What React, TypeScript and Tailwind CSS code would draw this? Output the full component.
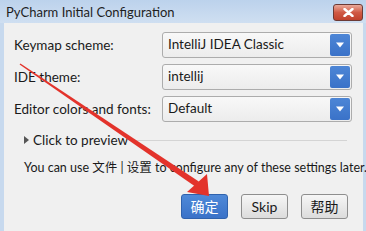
import React from 'react'

const ui = { fontFamily: 'Lato, "Noto Sans CJK SC", sans-serif' }

function Combo({ value }: { value: string }) {
  return (
    <div className="flex h-[26px] w-[190px] items-center rounded-[3px] border border-[#acacac] bg-gradient-to-b from-[#f8f8f8] to-[#ececec]">
      <span className="flex-1 pl-[5px] text-[13.5px] leading-none text-[#1a1a1a]">{value}</span>
      <div className="mr-px flex h-[22px] w-[20px] items-center justify-center rounded-[2px] bg-gradient-to-b from-[#4d86d6] to-[#3a72c8]">
        <svg width="8" height="6" viewBox="0 0 8 6">
          <path d="M0 0.5 L8 0.5 L4 5.5 Z" fill="#ffffff" />
        </svg>
      </div>
    </div>
  )
}

function Row({ label, value }: { label: string; value: string }) {
  return (
    <div className="flex h-[26px] items-center">
      <span className="w-[148px] text-[13.5px] text-[#1a1a1a]">{label}</span>
      <Combo value={value} />
    </div>
  )
}

function Arrow() {
  return (
    <svg className="pointer-events-none absolute left-0 top-0" width="366" height="231" viewBox="0 0 366 231">
      <polygon points="19.6,64.6 20.4,63.4 198.8,181.4 195.2,186.6" fill="#e3332b" />
      <polygon points="209,196 207,174 187,192" fill="#e3332b" />
    </svg>
  )
}

export default function App() {
  return (
    <div className="relative flex h-[231px] w-[366px] flex-col overflow-hidden bg-[#c7d9ee]" style={ui}>
      {/* Title bar */}
      <div className="flex h-[23px] items-center justify-between bg-gradient-to-b from-[#bcd2ec] to-[#cfdff1] pl-[6px] pr-[3px]">
        <span className="pt-[2px] text-[13px] text-[#1e1e1e]">PyCharm Initial Configuration</span>
        <div className="mt-[2px] flex h-[17px] w-[30px] items-center justify-center rounded-[3px] border border-[#6b3a35] bg-gradient-to-b from-[#e9a99a] via-[#d05a45] to-[#c0412c]">
          <svg width="11" height="9" viewBox="0 0 11 9">
            <path d="M1.5 1 L9.5 8 M9.5 1 L1.5 8" stroke="#ffffff" strokeWidth="2.4" strokeLinecap="round" />
          </svg>
        </div>
      </div>

      {/* Body */}
      <div className="ml-[4px] mr-[3px] flex flex-1 flex-col bg-[#f0f0f0] pl-[10px] pt-[9px]">
        <div className="flex flex-col gap-[6px]">
          <Row label="Keymap scheme:" value="IntelliJ IDEA Classic" />
          <Row label="IDE theme:" value="intellij" />
          <Row label="Editor colors and fonts:" value="Default" />
        </div>

        <div className="mt-[9px] flex h-[18px] items-center pl-[10px] pr-[16px]">
          <svg width="5" height="8" viewBox="0 0 5 8" className="mr-[4px]">
            <path d="M0 0 L5 4 L0 8 Z" fill="#555555" />
          </svg>
          <span className="text-[13.5px] text-[#1a1a1a]">Click to preview</span>
          <div className="ml-[6px] h-px flex-1 bg-[#d4d4d4]" />
        </div>

        <div className="mt-[9px] pl-[10px] text-[12.5px] leading-[20px] text-[#1a1a1a] whitespace-nowrap">
          You can use 文件 | 设置 to configure any of these settings later.
        </div>

        <div className="mt-[16px] flex justify-end gap-[13px] pr-[15px]">
          <button className="h-[25px] w-[47px] rounded-[3px] border border-[#2f62ad] bg-gradient-to-b from-[#4f89d8] to-[#3a72c8] text-[14px] text-white">
            确定
          </button>
          <button className="h-[25px] w-[47px] rounded-[3px] border border-[#8e8e8e] bg-gradient-to-b from-[#f6f6f6] to-[#dcdcdc] text-[14px] text-[#1a1a1a]">
            Skip
          </button>
          <button className="h-[25px] w-[47px] rounded-[3px] border border-[#8e8e8e] bg-gradient-to-b from-[#f6f6f6] to-[#dcdcdc] text-[14px] text-[#1a1a1a]">
            帮助
          </button>
        </div>
      </div>

      <Arrow />
    </div>
  )
}
